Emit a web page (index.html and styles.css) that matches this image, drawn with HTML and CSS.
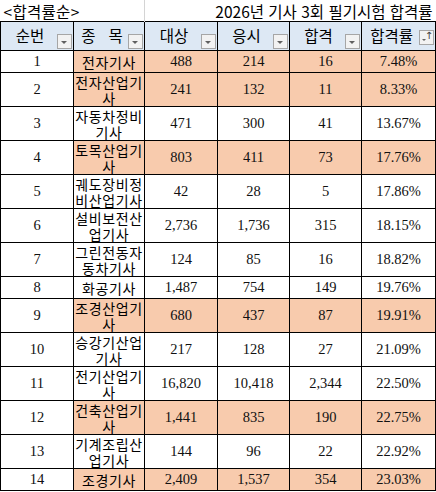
FILE: index.html
```html
<!DOCTYPE html>
<html lang="ko">
<head>
    <meta charset="UTF-8">
    <meta name="viewport" content="width=device-width, initial-scale=1.0">
    <title>합격률순</title>
    <link rel="stylesheet" href="styles.css">
</head>
<body>
    <table class="sheet">
        <colgroup>
            <col class="c1"><col class="c2"><col class="c3"><col class="c4"><col class="c5"><col class="c6">
        </colgroup>
        <tr class="title-row">
            <td colspan="2" class="title-left">&lt;합격률순&gt;</td>
            <td colspan="4" class="title-right">2026년 기사 3회 필기시험 합격률</td>
        </tr>
        <tr class="head-row">
            <th><span class="head-text">순번</span><span class="filter"></span></th>
            <th><span class="head-text">종&nbsp;&nbsp;&nbsp;목</span><span class="filter"></span></th>
            <th><span class="head-text">대상</span><span class="filter"></span></th>
            <th><span class="head-text">응시</span><span class="filter"></span></th>
            <th><span class="head-text">합격</span><span class="filter"></span></th>
            <th><span class="head-text">합격률</span><span class="filter sort"><span class="arrow">↑</span></span></th>
        </tr>
        <tr class="one hl"><td class="num">1</td><td class="name">전자기사</td><td class="num">488</td><td class="num">214</td><td class="num">16</td><td class="num">7.48%</td></tr>
        <tr class="two hl"><td class="num">2</td><td class="name">전자산업기<br>사</td><td class="num">241</td><td class="num">132</td><td class="num">11</td><td class="num">8.33%</td></tr>
        <tr class="two"><td class="num">3</td><td class="name">자동차정비<br>기사</td><td class="num">471</td><td class="num">300</td><td class="num">41</td><td class="num">13.67%</td></tr>
        <tr class="two hl"><td class="num">4</td><td class="name">토목산업기<br>사</td><td class="num">803</td><td class="num">411</td><td class="num">73</td><td class="num">17.76%</td></tr>
        <tr class="two"><td class="num">5</td><td class="name">궤도장비정<br>비산업기사</td><td class="num">42</td><td class="num">28</td><td class="num">5</td><td class="num">17.86%</td></tr>
        <tr class="two"><td class="num">6</td><td class="name">설비보전산<br>업기사</td><td class="num">2,736</td><td class="num">1,736</td><td class="num">315</td><td class="num">18.15%</td></tr>
        <tr class="two"><td class="num">7</td><td class="name">그린전동자<br>동차기사</td><td class="num">124</td><td class="num">85</td><td class="num">16</td><td class="num">18.82%</td></tr>
        <tr class="one"><td class="num">8</td><td class="name">화공기사</td><td class="num">1,487</td><td class="num">754</td><td class="num">149</td><td class="num">19.76%</td></tr>
        <tr class="two hl"><td class="num">9</td><td class="name">조경산업기<br>사</td><td class="num">680</td><td class="num">437</td><td class="num">87</td><td class="num">19.91%</td></tr>
        <tr class="two"><td class="num">10</td><td class="name">승강기산업<br>기사</td><td class="num">217</td><td class="num">128</td><td class="num">27</td><td class="num">21.09%</td></tr>
        <tr class="two"><td class="num">11</td><td class="name">전기산업기<br>사</td><td class="num">16,820</td><td class="num">10,418</td><td class="num">2,344</td><td class="num">22.50%</td></tr>
        <tr class="two hl"><td class="num">12</td><td class="name">건축산업기<br>사</td><td class="num">1,441</td><td class="num">835</td><td class="num">190</td><td class="num">22.75%</td></tr>
        <tr class="two"><td class="num">13</td><td class="name">기계조립산<br>업기사</td><td class="num">144</td><td class="num">96</td><td class="num">22</td><td class="num">22.92%</td></tr>
        <tr class="one hl"><td class="num">14</td><td class="name">조경기사</td><td class="num">2,409</td><td class="num">1,537</td><td class="num">354</td><td class="num">23.03%</td></tr>
    </table>
</body>
</html>
```

FILE: styles.css
```css
body {
    margin: 0;
    background: #fff;
}
.sheet {
    border-collapse: collapse;
    table-layout: fixed;
    width: 435px;
    font-family: "Noto Sans CJK KR", "Noto Sans", sans-serif;
}
.c1 { width: 73px; }
.c2 { width: 71px; }
.c3 { width: 73px; }
.c4 { width: 72px; }
.c5 { width: 72px; }
.c6 { width: 74px; }

.sheet td,
.sheet th {
    padding: 0;
    border: 1px solid #000;
    text-align: center;
    vertical-align: middle;
}
.title-row td {
    height: 21px;
    border: none;
    font-size: 15.5px;
    line-height: 20px;
    color: #000;
}
.title-left {
    text-align: left !important;
    padding-left: 3px !important;
    letter-spacing: 0.3px;
    border-right: 1px solid #d4d4d4 !important;
}
.title-right {
    text-align: right !important;
    padding-right: 3px !important;
}
.head-row th {
    position: relative;
    height: 28px;
    background: #dde8f4;
    font-weight: normal;
    font-size: 15.5px;
    line-height: 18px;
}
.head-text {
    display: inline-block;
    padding-right: 14px;
    padding-bottom: 3px;
}
.filter {
    position: absolute;
    right: 1px;
    bottom: 1px;
    width: 13px;
    height: 13px;
    background: #f2f2f2;
    border: 1px solid #a6a6a6;
}
.filter::after {
    content: "";
    position: absolute;
    left: 3px;
    top: 6px;
    border-left: 3.5px solid transparent;
    border-right: 3.5px solid transparent;
    border-top: 3.5px solid #606060;
}
.sort {
    bottom: 5px;
}
.sort::after {
    left: 2px;
    top: 8px;
    border-left-width: 2.5px;
    border-right-width: 2.5px;
    border-top-width: 2.5px;
}
.arrow {
    position: absolute;
    right: 0;
    top: -2px;
    font-family: "DejaVu Sans", sans-serif;
    font-size: 10px;
    line-height: 14px;
    color: #404040;
}
.one td {
    height: 21px;
}
.two td {
    height: 33px;
}
.num {
    font-family: "Liberation Serif", serif;
    font-size: 14.5px;
    line-height: 17px;
    color: #111;
}
.name {
    font-size: 14px;
    line-height: 16px;
    letter-spacing: 0.6px;
    color: #000;
}
.hl td {
    background: #f8cbad;
}
.hl td:first-child {
    background: #fff;
}
```
